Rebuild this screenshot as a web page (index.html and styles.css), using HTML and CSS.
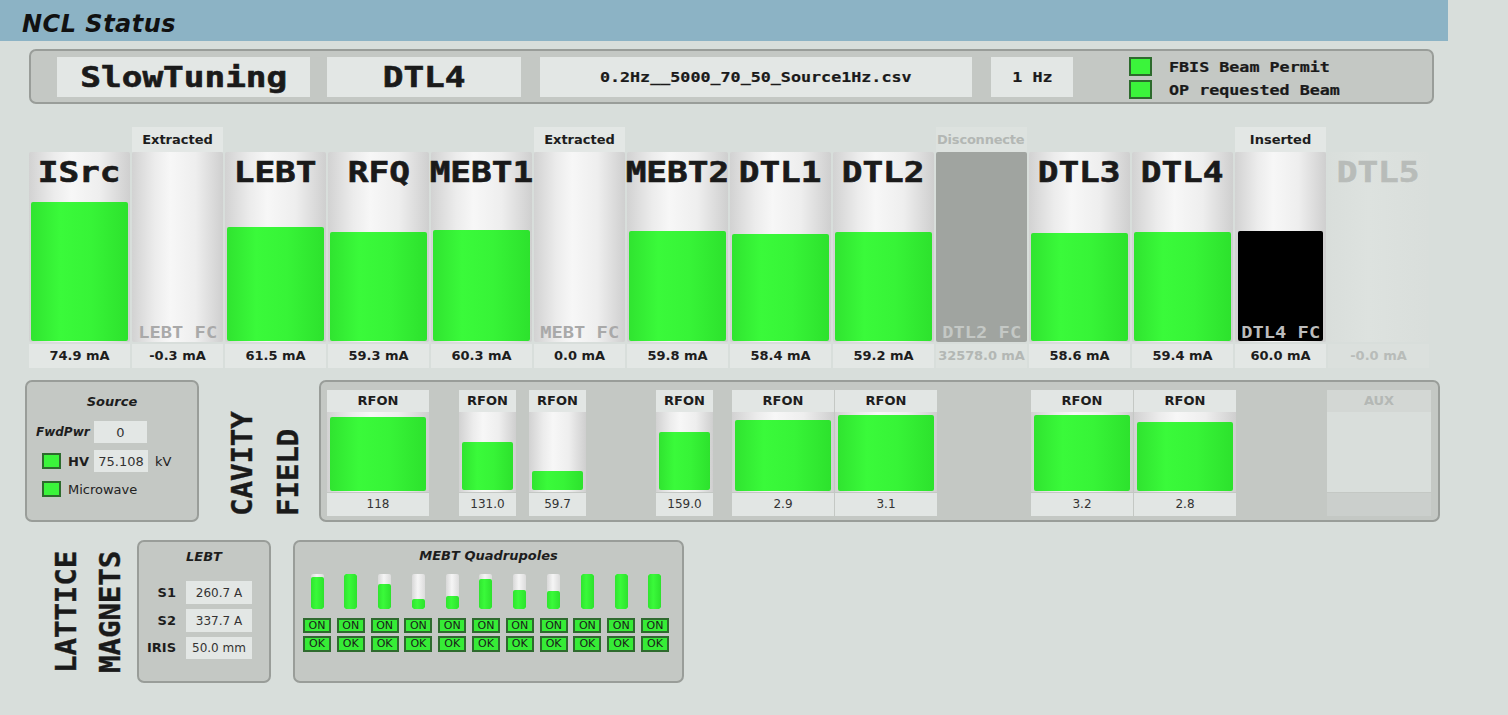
FILE: index.html
```html
<!DOCTYPE html>
<html>
<head>
<meta charset="utf-8">
<title>NCL Status</title>
<link rel="stylesheet" href="styles.css">
</head>
<body>
<header class="header"><h1>NCL Status</h1></header>

<section class="topbar">
  <div class="field f-mode"><span class="mono-lg">SlowTuning</span></div>
  <div class="field f-sect"><span class="mono-lg">DTL4</span></div>
  <div class="field f-file"><span class="mono-sm">0.2Hz__5000_70_50_Source1Hz.csv</span></div>
  <div class="field f-rate"><span class="mono-sm">1 Hz</span></div>
  <div class="legend">
    <div class="legend-row"><span class="led"></span><span class="mono-sm left">FBIS Beam Permit</span></div>
    <div class="legend-row"><span class="led"></span><span class="mono-sm left">OP requested Beam</span></div>
  </div>
</section>

<section class="beam">
  <div class="col">
    <div class="col-top"></div>
    <div class="tube"><div class="tube-label"><span class="mono-lg">ISrc</span></div><div class="fill" style="height:139px"></div></div>
    <div class="val">74.9 mA</div>
  </div>
  <div class="col fc">
    <div class="col-top state">Extracted</div>
    <div class="tube fc-tube"><div class="fc-fill"><span class="fc-name">LEBT FC</span></div></div>
    <div class="val">-0.3 mA</div>
  </div>
  <div class="col">
    <div class="col-top"></div>
    <div class="tube"><div class="tube-label"><span class="mono-lg">LEBT</span></div><div class="fill" style="height:114px"></div></div>
    <div class="val">61.5 mA</div>
  </div>
  <div class="col">
    <div class="col-top"></div>
    <div class="tube"><div class="tube-label"><span class="mono-lg">RFQ</span></div><div class="fill" style="height:109px"></div></div>
    <div class="val">59.3 mA</div>
  </div>
  <div class="col">
    <div class="col-top"></div>
    <div class="tube"><div class="tube-label"><span class="mono-lg">MEBT1</span></div><div class="fill" style="height:111px"></div></div>
    <div class="val">60.3 mA</div>
  </div>
  <div class="col fc">
    <div class="col-top state">Extracted</div>
    <div class="tube fc-tube"><div class="fc-fill"><span class="fc-name">MEBT FC</span></div></div>
    <div class="val">0.0 mA</div>
  </div>
  <div class="col">
    <div class="col-top"></div>
    <div class="tube"><div class="tube-label"><span class="mono-lg">MEBT2</span></div><div class="fill" style="height:110px"></div></div>
    <div class="val">59.8 mA</div>
  </div>
  <div class="col">
    <div class="col-top"></div>
    <div class="tube"><div class="tube-label"><span class="mono-lg">DTL1</span></div><div class="fill" style="height:107px"></div></div>
    <div class="val">58.4 mA</div>
  </div>
  <div class="col">
    <div class="col-top"></div>
    <div class="tube"><div class="tube-label"><span class="mono-lg">DTL2</span></div><div class="fill" style="height:109px"></div></div>
    <div class="val">59.2 mA</div>
  </div>
  <div class="col fc off">
    <div class="col-top state">Disconnecte</div>
    <div class="tube fc-tube gray"><div class="fc-fill"><span class="fc-name">DTL2 FC</span></div></div>
    <div class="val">32578.0 mA</div>
  </div>
  <div class="col">
    <div class="col-top"></div>
    <div class="tube"><div class="tube-label"><span class="mono-lg">DTL3</span></div><div class="fill" style="height:108px"></div></div>
    <div class="val">58.6 mA</div>
  </div>
  <div class="col">
    <div class="col-top"></div>
    <div class="tube"><div class="tube-label"><span class="mono-lg">DTL4</span></div><div class="fill" style="height:109px"></div></div>
    <div class="val">59.4 mA</div>
  </div>
  <div class="col fc">
    <div class="col-top state">Inserted</div>
    <div class="tube fc-tube"><div class="fc-fill inserted" style="height:110px"><span class="fc-name">DTL4 FC</span></div></div>
    <div class="val">60.0 mA</div>
  </div>
  <div class="col disabled">
    <div class="col-top"></div>
    <div class="tube"><div class="tube-label"><span class="mono-lg">DTL5</span></div></div>
    <div class="val">-0.0 mA</div>
  </div>
</section>

<section class="lower">
  <div class="panel source">
    <div class="src-title">Source</div>
    <div class="src-row r1"><span class="src-lbl">FwdPwr</span><span class="box w53">0</span></div>
    <div class="src-row r2"><span class="src-led"><span class="led sm"></span><b>HV</b></span><span class="box w54">75.108</span><span class="unit">kV</span></div>
    <div class="src-row r3"><span class="led sm lead"></span><span class="src-text">Microwave</span></div>
  </div>

  <div class="cav-labels">
    <div class="vtext">CAVITY</div>
    <div class="vtext">FIELD</div>
  </div>

  <div class="panel cavity">
    <div class="cav w ml6">
      <div class="cav-lbl">RFON</div>
      <div class="cav-tube"><div class="cav-fill" style="height:74px"></div></div>
      <div class="cav-val">118</div>
    </div>
    <div class="cav n ml30">
      <div class="cav-lbl">RFON</div>
      <div class="cav-tube"><div class="cav-fill b2" style="height:48px"></div></div>
      <div class="cav-val">131.0</div>
    </div>
    <div class="cav n ml13">
      <div class="cav-lbl">RFON</div>
      <div class="cav-tube"><div class="cav-fill b2" style="height:19px"></div></div>
      <div class="cav-val">59.7</div>
    </div>
    <div class="cav n ml70">
      <div class="cav-lbl">RFON</div>
      <div class="cav-tube"><div class="cav-fill b2" style="height:58px"></div></div>
      <div class="cav-val">159.0</div>
    </div>
    <div class="cav w ml19">
      <div class="cav-lbl">RFON</div>
      <div class="cav-tube"><div class="cav-fill" style="height:71px"></div></div>
      <div class="cav-val">2.9</div>
    </div>
    <div class="cav w ml1">
      <div class="cav-lbl">RFON</div>
      <div class="cav-tube"><div class="cav-fill" style="height:76px"></div></div>
      <div class="cav-val">3.1</div>
    </div>
    <div class="cav w ml94">
      <div class="cav-lbl">RFON</div>
      <div class="cav-tube"><div class="cav-fill" style="height:76px"></div></div>
      <div class="cav-val">3.2</div>
    </div>
    <div class="cav w ml1">
      <div class="cav-lbl">RFON</div>
      <div class="cav-tube"><div class="cav-fill" style="height:69px"></div></div>
      <div class="cav-val">2.8</div>
    </div>
    <div class="cav aux ml91">
      <div class="cav-lbl">AUX</div>
      <div class="cav-tube"></div>
      <div class="cav-val"></div>
    </div>
  </div>
</section>

<section class="bottom">
  <div class="mag-labels">
    <div class="vtext">LATTICE</div>
    <div class="vtext">MAGNETS</div>
  </div>

  <div class="panel lebt">
    <div class="p-title">LEBT</div>
    <div class="lrow first"><span class="lrow-l">S1</span><span class="box w66">260.7 A</span></div>
    <div class="lrow g5"><span class="lrow-l">S2</span><span class="box w66">337.7 A</span></div>
    <div class="lrow g4"><span class="lrow-l">IRIS</span><span class="box w66 h22">50.0 mm</span></div>
  </div>

  <div class="panel quads">
    <div class="p-title">MEBT Quadrupoles</div>
    <div class="qgrid">
      <div class="q"><div class="qbar"><div class="qfill" style="height:32px"></div></div><span class="tag on">ON</span><span class="tag">OK</span></div>
      <div class="q"><div class="qbar"><div class="qfill" style="height:35px"></div></div><span class="tag on">ON</span><span class="tag">OK</span></div>
      <div class="q"><div class="qbar"><div class="qfill" style="height:25px"></div></div><span class="tag on">ON</span><span class="tag">OK</span></div>
      <div class="q"><div class="qbar"><div class="qfill" style="height:10px"></div></div><span class="tag on">ON</span><span class="tag">OK</span></div>
      <div class="q"><div class="qbar"><div class="qfill" style="height:13px"></div></div><span class="tag on">ON</span><span class="tag">OK</span></div>
      <div class="q"><div class="qbar"><div class="qfill" style="height:30px"></div></div><span class="tag on">ON</span><span class="tag">OK</span></div>
      <div class="q"><div class="qbar"><div class="qfill" style="height:19px"></div></div><span class="tag on">ON</span><span class="tag">OK</span></div>
      <div class="q"><div class="qbar"><div class="qfill" style="height:18px"></div></div><span class="tag on">ON</span><span class="tag">OK</span></div>
      <div class="q"><div class="qbar"><div class="qfill" style="height:35px"></div></div><span class="tag on">ON</span><span class="tag">OK</span></div>
      <div class="q"><div class="qbar"><div class="qfill" style="height:35px"></div></div><span class="tag on">ON</span><span class="tag">OK</span></div>
      <div class="q"><div class="qbar"><div class="qfill" style="height:35px"></div></div><span class="tag on">ON</span><span class="tag">OK</span></div>
    </div>
  </div>
</section>
</body>
</html>
```

FILE: styles.css
```css
* { box-sizing: border-box; }
html, body { margin: 0; }
body {
  width: 1508px;
  height: 715px;
  overflow: hidden;
  background: #d8dedb;
  font-family: "DejaVu Sans", sans-serif;
  font-size: 13px;
  color: #1d1d1d;
}

/* header */
.header {
  width: 1448px;
  height: 41px;
  background: #8cb3c5;
  padding: 6px 0 0 22px;
  display: flex;
  align-items: center;
}
.header h1 {
  margin: 0;
  font-size: 24px;
  font-weight: bold;
  font-style: italic;
  letter-spacing: 0.5px;
  line-height: 28px;
  color: #111;
}

/* mono text */
.mono-lg {
  display: inline-block;
  font-family: "DejaVu Sans Mono", monospace;
  font-weight: bold;
  font-size: 27.5px;
  line-height: 32px;
  transform: scaleX(1.25);
  white-space: nowrap;
  color: #1a1a1a;
  -webkit-text-stroke: 0.6px currentColor;
}
.mono-sm {
  display: inline-block;
  font-family: "DejaVu Sans Mono", monospace;
  font-weight: bold;
  font-size: 13.7px;
  line-height: 16px;
  transform: scaleX(1.22);
  white-space: nowrap;
  color: #1a1a1a;
  -webkit-text-stroke: 0.2px currentColor;
}
.left { transform-origin: left center; }

/* top bar */
.topbar {
  margin: 8px 0 0 29px;
  width: 1405px;
  height: 55px;
  background: #c4c8c4;
  border: 2px solid #999d99;
  border-radius: 7px;
  display: flex;
  align-items: center;
  padding-left: 26px;
}
.field {
  flex: none;
  height: 40px;
  background: #e3e7e5;
  display: flex;
  align-items: center;
  justify-content: center;
}
.f-mode { width: 253px; margin-right: 17px; }
.f-sect { width: 194px; margin-right: 19px; }
.f-file { width: 432px; margin-right: 19px; }
.f-rate { width: 82px; margin-right: 56px; }
.legend { display: flex; flex-direction: column; gap: 4px; margin-top: 3px; }
.legend-row { display: flex; align-items: center; gap: 17px; height: 19px; }
.led {
  flex: none;
  width: 23px;
  height: 19px;
  background: #3bf43b;
  border: 2px solid #2d6a2d;
}
.led.sm { width: 19px; height: 16px; }

/* beam row */
.beam { display: flex; gap: 2px; margin: 23px 0 0 29px; }
.col { flex: none; width: 101px; display: flex; flex-direction: column; }
.col.fc { width: 91px; }
.col-top { height: 25px; }
.state {
  background: #e3e7e5;
  font-weight: bold;
  text-align: center;
  line-height: 25px;
  white-space: nowrap;
}
.tube {
  height: 190px;
  display: flex;
  flex-direction: column;
  border-radius: 2px;
  background: linear-gradient(90deg, #d2d2d2 0%, #ececec 25%, #f7f7f7 42%, #eeeeee 70%, #cfcfcf 100%);
}
.tube-label { height: 36px; padding-top: 4px; text-align: center; }
.fill {
  margin: auto 2px 1px;
  border-radius: 2px;
  background: linear-gradient(90deg, #30e430 0%, #3afa3a 30%, #37f437 62%, #2de22d 100%);
}
.fc-tube { justify-content: flex-end; }
.fc-fill {
  margin: 0 3px 1px;
  border-radius: 2px;
  display: flex;
  align-items: flex-end;
  justify-content: center;
}
.fc-fill.inserted { background: #000; }
.fc-name {
  display: inline-block;
  font-family: "DejaVu Sans Mono", monospace;
  font-weight: bold;
  font-size: 16px;
  line-height: 16px;
  transform: scaleX(1.17);
  white-space: nowrap;
  color: #a9a9a9;
}
.inserted .fc-name { color: #bcbcbc; }
.val {
  margin-top: 2px;
  height: 24px;
  line-height: 24px;
  background: #e3e7e5;
  text-align: center;
  font-weight: bold;
  white-space: nowrap;
}
.off .state { background: #dde2df; color: #b3b7b4; text-align: left; padding-left: 1px; letter-spacing: -0.2px; }
.tube.gray { background: #a0a4a0; }
.off .fc-name { color: #c4c8c5; }
.off .val { background: #dde2df; color: #b3b7b4; letter-spacing: -0.1px; }
.disabled .tube { background: linear-gradient(90deg, #d9dedb 0%, #dde2df 40%, #d9dedb 100%); }
.disabled .mono-lg { color: #b8bcb9; }
.disabled .val { background: #dbe0dd; color: #b8bcb9; }

/* lower row */
.lower { display: flex; align-items: flex-start; margin: 12px 0 0 25px; height: 142px; }
.panel { flex: none; background: #c4c8c4; border: 2px solid #999d99; border-radius: 7px; }
.source { width: 174px; height: 142px; padding-top: 11px; }
.src-title, .p-title {
  font-weight: bold;
  font-style: italic;
  text-align: center;
  line-height: 18px;
  height: 18px;
}
.src-row { display: flex; align-items: center; padding-left: 9px; height: 22px; }
.src-row.r1 { margin-top: 10px; }
.src-row.r2 { margin-top: 7px; }
.src-row.r3 { margin-top: 6px; }
.src-lbl { width: 58px; font-weight: bold; font-style: italic; font-size: 12px; }
.src-led { width: 58px; display: flex; align-items: center; gap: 7px; padding-left: 6px; }
.led.lead { margin-left: 6px; margin-right: 7px; }
.src-text { color: #222; }
.unit { margin-left: 7px; color: #222; }
.box {
  flex: none;
  background: #e3e7e5;
  height: 22px;
  display: flex;
  align-items: center;
  justify-content: center;
  color: #333;
}
.w53 { width: 53px; }
.w54 { width: 54px; }
.w66 { width: 66px; height: 23px; font-size: 12px; }
.box.h22 { height: 22px; }

.vtext {
  flex: none;
  writing-mode: vertical-rl;
  transform: rotate(180deg);
  font-family: "DejaVu Sans Mono", monospace;
  font-weight: bold;
  font-size: 29px;
  line-height: 22px;
  white-space: nowrap;
  color: #1a1a1a;
  -webkit-text-stroke: 0.4px currentColor;
}
.cav-labels { flex: none; display: flex; gap: 24px; margin-left: 32px; height: 136px; }
.cav-labels .vtext { height: 136px; }

.cavity { margin-left: 20px; width: 1121px; height: 142px; padding-top: 8px; display: flex; align-items: flex-start; }
.cav { flex: none; display: flex; flex-direction: column; }
.cav.w { width: 102px; }
.cav.n { width: 57px; }
.cav.aux { width: 104px; }
.ml1 { margin-left: 1px; }
.ml6 { margin-left: 6px; }
.ml13 { margin-left: 13px; }
.ml19 { margin-left: 19px; }
.ml30 { margin-left: 30px; }
.ml70 { margin-left: 70px; }
.ml91 { margin-left: 91px; }
.ml94 { margin-left: 94px; }
.cav-lbl { height: 22px; line-height: 22px; background: #e2e6e4; text-align: center; font-weight: bold; }
.cav-tube {
  height: 80px;
  display: flex;
  flex-direction: column;
  justify-content: flex-end;
  background: linear-gradient(90deg, #d2d2d2 0%, #ececec 25%, #f7f7f7 42%, #eeeeee 70%, #cfcfcf 100%);
}
.cav-fill {
  margin: 0 3px 1px;
  border-radius: 2px;
  background: linear-gradient(90deg, #30e430 0%, #3afa3a 30%, #37f437 62%, #2de22d 100%);
}
.cav-fill.b2 { margin-bottom: 2px; }
.cav-val { margin-top: 1px; height: 23px; line-height: 23px; background: #e2e6e4; text-align: center; font-size: 12px; color: #333; }
.aux .cav-lbl { background: #d3d7d4; color: #b4b8b5; }
.aux .cav-tube { background: #d9dedb; }
.aux .cav-val { background: #cbcfcc; }

/* bottom row */
.bottom { display: flex; align-items: flex-start; margin: 18px 0 0 55px; }
.mag-labels { flex: none; display: flex; gap: 22px; height: 133px; }
.mag-labels .vtext { height: 133px; }
.lebt { margin-left: 16px; width: 134px; height: 143px; padding-top: 6px; }
.lrow { display: flex; align-items: center; height: 23px; }
.lrow.first { margin-top: 15px; }
.lrow.g5 { margin-top: 5px; }
.lrow.g4 { margin-top: 4px; }
.lrow-l { width: 47px; padding-right: 10px; text-align: right; font-weight: bold; }

.quads { margin-left: 22px; width: 391px; height: 143px; padding-top: 5px; }
.qgrid {
  display: grid;
  grid-template-columns: repeat(11, 28px);
  column-gap: 5.8px;
  padding-left: 8px;
  margin-top: 9px;
}
.q { display: flex; flex-direction: column; align-items: center; }
.qbar {
  width: 13px;
  height: 35px;
  border-radius: 2px;
  overflow: hidden;
  display: flex;
  flex-direction: column;
  justify-content: flex-end;
  background: linear-gradient(90deg, #d8d8d8 0%, #f5f5f5 45%, #dcdcdc 100%);
}
.qfill { border-radius: 2px; background: linear-gradient(90deg, #30e430 0%, #3afa3a 40%, #2de22d 100%); }
.tag {
  width: 28px;
  height: 16px;
  margin-top: 3px;
  background: #36ec36;
  border: 2px solid #2e6a2e;
  font-size: 11px;
  line-height: 12px;
  text-align: center;
  color: #1a1a1a;
}
.tag.on { height: 15px; margin-top: 9px; line-height: 11px; }
```
